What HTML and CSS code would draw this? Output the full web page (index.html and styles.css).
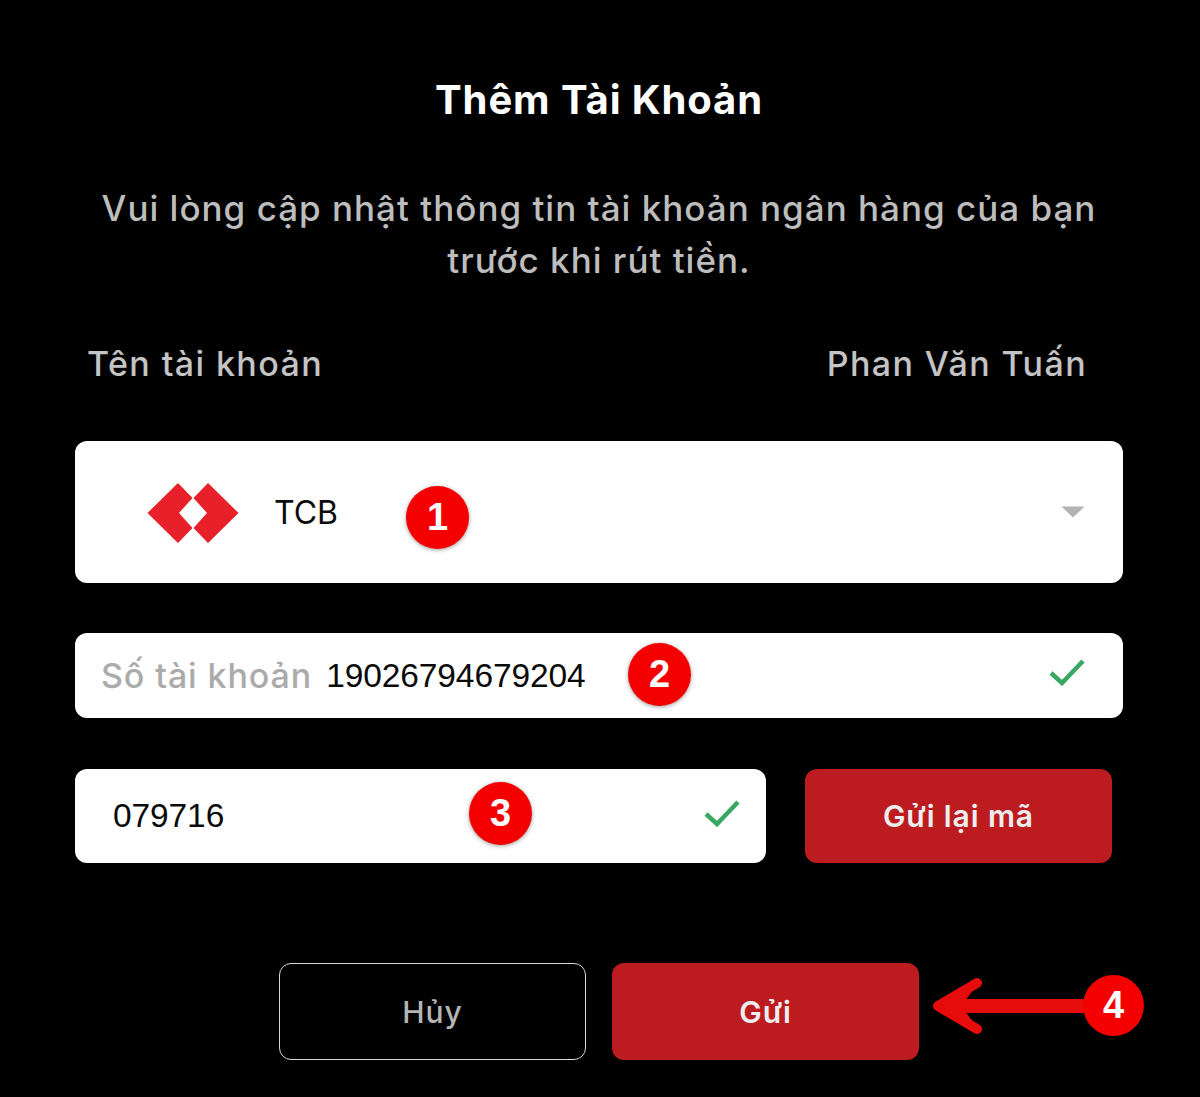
FILE: index.html
```html
<!DOCTYPE html>
<html lang="vi">
<head>
<meta charset="utf-8">
<title>Thêm Tài Khoản</title>
<link rel="stylesheet" href="styles.css">
</head>
<body>
<main class="dialog">
  <h1 class="title">Thêm Tài Khoản</h1>
  <p class="intro">Vui lòng cập nhật thông tin tài khoản ngân hàng của bạn<br>trước khi rút tiền.</p>
  <div class="name-row"><span>Tên tài khoản</span><span>Phan Văn Tuấn</span></div>
  <div class="field field-select">
    <svg class="bank-logo" viewBox="0 0 92 62" aria-hidden="true">
      <path fill="#e8202a" d="M31 1L45.500 16L32 31L45.500 46L31 61L0.500 31Z"/>
      <path fill="#e8202a" d="M61 1L91.500 31L61 61L46.500 46L60 31L46.500 16Z"/>
    </svg>
    <span class="bank-name">TCB</span>
    <svg class="caret" viewBox="0 0 24 12" aria-hidden="true"><path fill="#b3b3b3" d="M0.500 0.500H23.500L12 11.500Z"/></svg>
    <span class="badge badge-1">1</span>
  </div>
  <div class="field field-account">
    <span class="placeholder">Số tài khoản</span>
    <span class="value">19026794679204</span>
    <svg class="check" viewBox="0 0 36 28" aria-hidden="true"><path fill="none" stroke="#39a862" stroke-width="4.500" d="M2 15L13 25L34 3"/></svg>
    <span class="badge badge-2">2</span>
  </div>
  <div class="code-row">
    <div class="field field-code">
      <span class="value">079716</span>
      <svg class="check" viewBox="0 0 36 28" aria-hidden="true"><path fill="none" stroke="#39a862" stroke-width="4.500" d="M2 15L13 25L34 3"/></svg>
      <span class="badge badge-3">3</span>
    </div>
    <button class="btn btn-red btn-resend" type="button">Gửi lại mã</button>
  </div>
  <div class="actions">
    <button class="btn btn-outline" type="button">Hủy</button>
    <button class="btn btn-red" type="button">Gửi</button>
    <svg class="arrow" viewBox="0 0 160 58" aria-hidden="true">
      <path fill="none" stroke="#e60c0c" stroke-width="14" d="M24 29H160"/>
      <path fill="none" stroke="#e60c0c" stroke-width="10" stroke-linecap="round" stroke-linejoin="round" d="M46 6L7 29L46 52"/>
      <path fill="#e60c0c" d="M7 29L46 8L30 29L46 50Z"/>
    </svg>
    <span class="badge badge-4">4</span>
  </div>
</main>
</body>
</html>
```
FILE: styles.css
```css
* { box-sizing: border-box; }
html, body { margin: 0; background: #000; }
body { width: 1200px; height: 1097px; overflow: hidden; font-family: Inter, "Liberation Sans", sans-serif; }
.dialog { display: flex; flex-direction: column; padding: 76px 77px 0 75px; }
.title { margin: 0; height: 48px; color: #fff; font-size: 40px; line-height: 48px; font-weight: 700; text-align: center; letter-spacing: 0.9px; }
.intro { margin: 58px 0 0; color: #bdbdbd; font-size: 35px; line-height: 52px; font-weight: 500; text-align: center; letter-spacing: 1px; }
.name-row { display: flex; justify-content: space-between; margin-top: 51px; padding: 0 36px 0 12px; height: 52px; color: #c4c4c4; font-size: 34px; font-weight: 500; line-height: 54px; letter-spacing: 1.400px; }
.field { position: relative; display: flex; align-items: center; background: #fff; border-radius: 12px; color: #0b0b0b; }
.field-select { height: 142px; margin-top: 52px; padding: 0 38px 0 72px; }
.bank-logo { width: 92px; height: 62px; margin-top: 2px; }
.bank-name { margin-left: 35px; font-size: 32px; }
.caret { width: 24px; height: 12px; margin-left: auto; }
.field-account { height: 85px; margin-top: 50px; padding: 0 38px 0 26px; }
.placeholder { color: #ababab; font-size: 34px; font-weight: 500; letter-spacing: 0.9px; }
.value { font-family: "Liberation Sans", sans-serif; font-size: 33.500px; letter-spacing: -0.1px; }
.field-account .value { margin-left: 14px; }
.check { width: 36px; height: 28px; margin: -6px 0 0 auto; }
.field-account .check { margin-top: -8px; }
.code-row { display: flex; margin-top: 51px; padding-right: 11px; gap: 39px; }
.field-code { width: 691px; height: 94px; padding: 0 26px 0 38px; }
.btn { height: 94px; width: 307px; border: 0; border-radius: 12px; font: 600 30px Inter, "Liberation Sans", sans-serif; letter-spacing: 0.9px; }
.btn-red { background: #bc1c20; color: #eee; }
.btn-outline { background: #000; color: #b5b5b5; border: 1.500px solid #d8d8d8; font-weight: 500; width: 307px; }
.actions { position: relative; display: flex; gap: 26px; height: 97px; margin-top: 100px; padding-left: 204px; }
.actions .btn { height: 97px; }
.badge { position: absolute; display: flex; align-items: center; justify-content: center; width: 63px; height: 63px; border-radius: 50%; background: #f50000; color: #fff; font: 700 38px "Liberation Sans", sans-serif; box-shadow: 0 1px 4px rgba(0,0,0,.4); }
.badge-1 { left: 331px; top: 45px; }
.badge-2 { left: 553px; top: 10px; }
.badge-3 { left: 394px; top: 13px; }
.badge-4 { left: 1008px; top: 12px; width: 61px; height: 61px; box-shadow: none; }
.arrow { position: absolute; left: 856px; top: 14px; width: 160px; height: 58px; }
```
